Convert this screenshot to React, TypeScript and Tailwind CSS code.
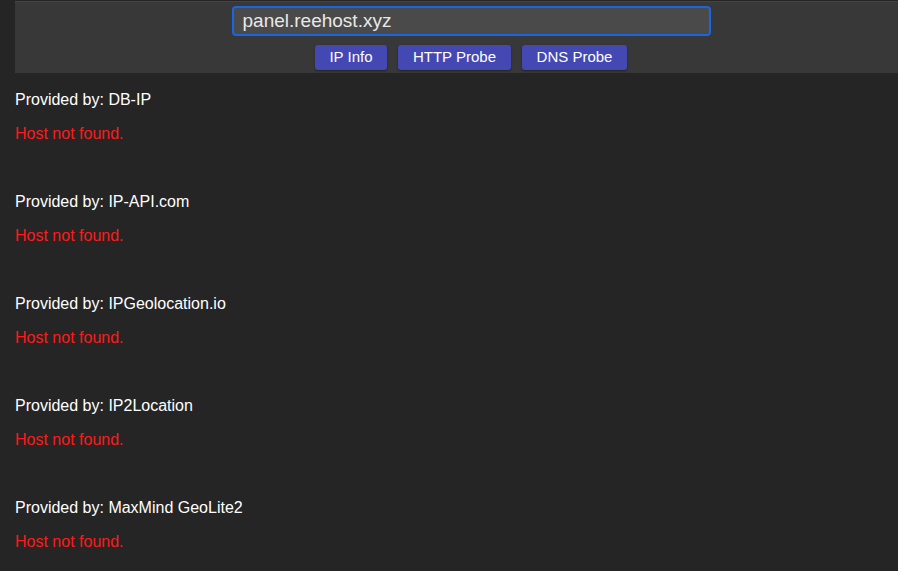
const providers = ['DB-IP', 'IP-API.com', 'IPGeolocation.io', 'IP2Location', 'MaxMind GeoLite2']

export default function App() {
  return (
    <div className="min-h-[571px] w-[898px] overflow-hidden bg-[#252525] font-['Liberation_Sans',Arial,sans-serif] text-white">
      {/* search bar */}
      <div className="pt-px pl-[15px]">
        <div className="flex h-[72px] w-[912px] flex-col items-center border-t border-[#454545] bg-[#383838] pt-[4px]">
          <input
            defaultValue="panel.reehost.xyz"
            className="h-[30px] w-[479px] rounded-[4px] border-2 border-[#1a66e0] bg-[#4a4a4a] px-[9px] text-[19px] text-[#e8e8e8] outline-none"
          />
          <div className="mt-[9px] flex gap-[11px]">
            <button className="h-[25px] w-[72px] rounded-[3px] bg-[#4348b3] text-[15px] text-white shadow-[0_1px_2px_rgba(0,0,0,0.4)]">IP Info</button>
            <button className="h-[25px] w-[113px] rounded-[3px] bg-[#4348b3] text-[15px] text-white shadow-[0_1px_2px_rgba(0,0,0,0.4)]">HTTP Probe</button>
            <button className="h-[25px] w-[105px] rounded-[3px] bg-[#4348b3] text-[15px] text-white shadow-[0_1px_2px_rgba(0,0,0,0.4)]">DNS Probe</button>
          </div>
        </div>
      </div>

      {/* results */}
      <div className="mt-[17px] flex flex-col gap-[48px] pl-[15px]">
        {providers.map((p) => (
          <div key={p} className="flex flex-col gap-[14px] text-[16px] leading-[20px]">
            <p>Provided by: {p}</p>
            <p className="text-[#ff1a1a]">Host not found.</p>
          </div>
        ))}
      </div>
    </div>
  )
}
